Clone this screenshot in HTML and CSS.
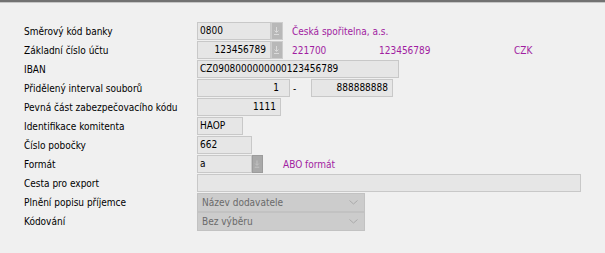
FILE: index.html
```html
<!DOCTYPE html>
<html lang="cs">
<head>
  <meta charset="UTF-8" />
  <title>Export plateb</title>
  <link rel="stylesheet" href="styles.css">
</head>
<body>
  <div class="topline"></div>
  <div class="form">
    <label>Směrový kód banky</label>
    <div class="cell">
      <span class="box w74">0800</span>
      <span class="picker"><svg width="11" height="17" viewBox="0 0 11 17"><path d="M5.5 4v5M3.5 7.5l2 2 2-2M3 11.5h5" fill="none" stroke="#dadada" stroke-width="1"/></svg></span>
      <span class="info">Česká spořitelna, a.s.</span>
    </div>

    <label>Základní číslo účtu</label>
    <div class="cell">
      <span class="box w74 num">123456789</span>
      <span class="picker"><svg width="11" height="17" viewBox="0 0 11 17"><path d="M5.5 4v5M3.5 7.5l2 2 2-2M3 11.5h5" fill="none" stroke="#dadada" stroke-width="1"/></svg></span>
      <span class="info prefix">221700</span>
      <span class="info account">123456789</span>
      <span class="info">CZK</span>
    </div>

    <label>IBAN</label>
    <div class="cell">
      <span class="box w202">CZ0908000000000123456789</span>
    </div>

    <label>Přidělený interval souborů</label>
    <div class="cell">
      <span class="box w93 num wide-pad">1</span>
      <span class="dash">-</span>
      <span class="box w82 num">888888888</span>
    </div>

    <label>Pevná část zabezpečovacího kódu</label>
    <div class="cell">
      <span class="box w84 num">1111</span>
    </div>

    <label>Identifikace komitenta</label>
    <div class="cell">
      <span class="box w46">HAOP</span>
    </div>

    <label>Číslo pobočky</label>
    <div class="cell">
      <span class="box w55">662</span>
    </div>

    <label>Formát</label>
    <div class="cell">
      <span class="box w55">a</span>
      <span class="picker dark"><svg width="11" height="17" viewBox="0 0 11 17"><path d="M5.5 4v5M3.5 7.5l2 2 2-2M3 11.5h5" fill="none" stroke="#c4c4c4" stroke-width="1"/></svg></span>
      <span class="info abo">ABO formát</span>
    </div>

    <label>Cesta pro export</label>
    <div class="cell">
      <span class="box w384"></span>
    </div>

    <label>Plnění popisu příjemce</label>
    <div class="cell">
      <span class="select">Název dodavatele<svg width="9" height="5" viewBox="0 0 9 5"><path d="M0.5 0.5l4 3.5 4-3.5" fill="none" stroke="#aaaaaa"/></svg></span>
    </div>

    <label>Kódování</label>
    <div class="cell">
      <span class="select">Bez výběru<svg width="9" height="5" viewBox="0 0 9 5"><path d="M0.5 0.5l4 3.5 4-3.5" fill="none" stroke="#aaaaaa"/></svg></span>
    </div>
  </div>
</body>
</html>
```

FILE: styles.css
```css
body {
  margin: 0;
  background: #f0f0f0;
  font-family: "DejaVu Sans Condensed", "DejaVu Sans", sans-serif;
  font-size: 10px;
  color: #000;
}
.topline {
  border-top: 2px solid #727272;
  border-bottom: 1px solid #c6c6c6;
}
.form {
  display: grid;
  grid-template-columns: 173px 1fr;
  grid-auto-rows: 19px;
  padding: 19px 0 0 24px;
}
label {
  display: flex;
  align-items: center;
  height: 18px;
}
.cell {
  display: flex;
  align-items: center;
  height: 18px;
}
.box {
  box-sizing: border-box;
  height: 18px;
  line-height: 16px;
  padding: 0 2px;
  background: #e6e6e6;
  border: 1px solid #c8c8c8;
  white-space: nowrap;
}
.box.num {
  text-align: right;
  padding-right: 4px;
}
.box.wide-pad {
  padding-right: 10px;
}
.w46 { width: 46px; }
.w55 { width: 55px; }
.w74 { width: 74px; }
.w82 { width: 82px; }
.w84 { width: 84px; }
.w93 { width: 93px; }
.w202 { width: 202px; }
.w384 { width: 384px; }
.picker {
  box-sizing: border-box;
  width: 12px;
  height: 18px;
  background: #b8b8b8;
  border: 1px solid #cdcdcd;
  display: flex;
}
.picker.dark {
  width: 11px;
  background: #a9a9a9;
  border-color: #9c9c9c;
}
.picker svg {
  display: block;
  margin-left: -1px;
}
.info {
  color: #a11da1;
  margin-left: 9px;
  white-space: nowrap;
}
.info.prefix {
  width: 78px;
}
.info.account {
  margin-left: 9px;
  width: 126px;
}
.info.abo {
  margin-left: 20px;
}
.dash {
  box-sizing: border-box;
  width: 21px;
  padding-left: 3px;
}
.select {
  box-sizing: border-box;
  width: 168px;
  height: 19px;
  padding: 0 6px 0 4px;
  background: #cccccc;
  border: 1px solid #c2c2c2;
  color: #6a6a6a;
  display: flex;
  align-items: center;
  justify-content: space-between;
}
```
